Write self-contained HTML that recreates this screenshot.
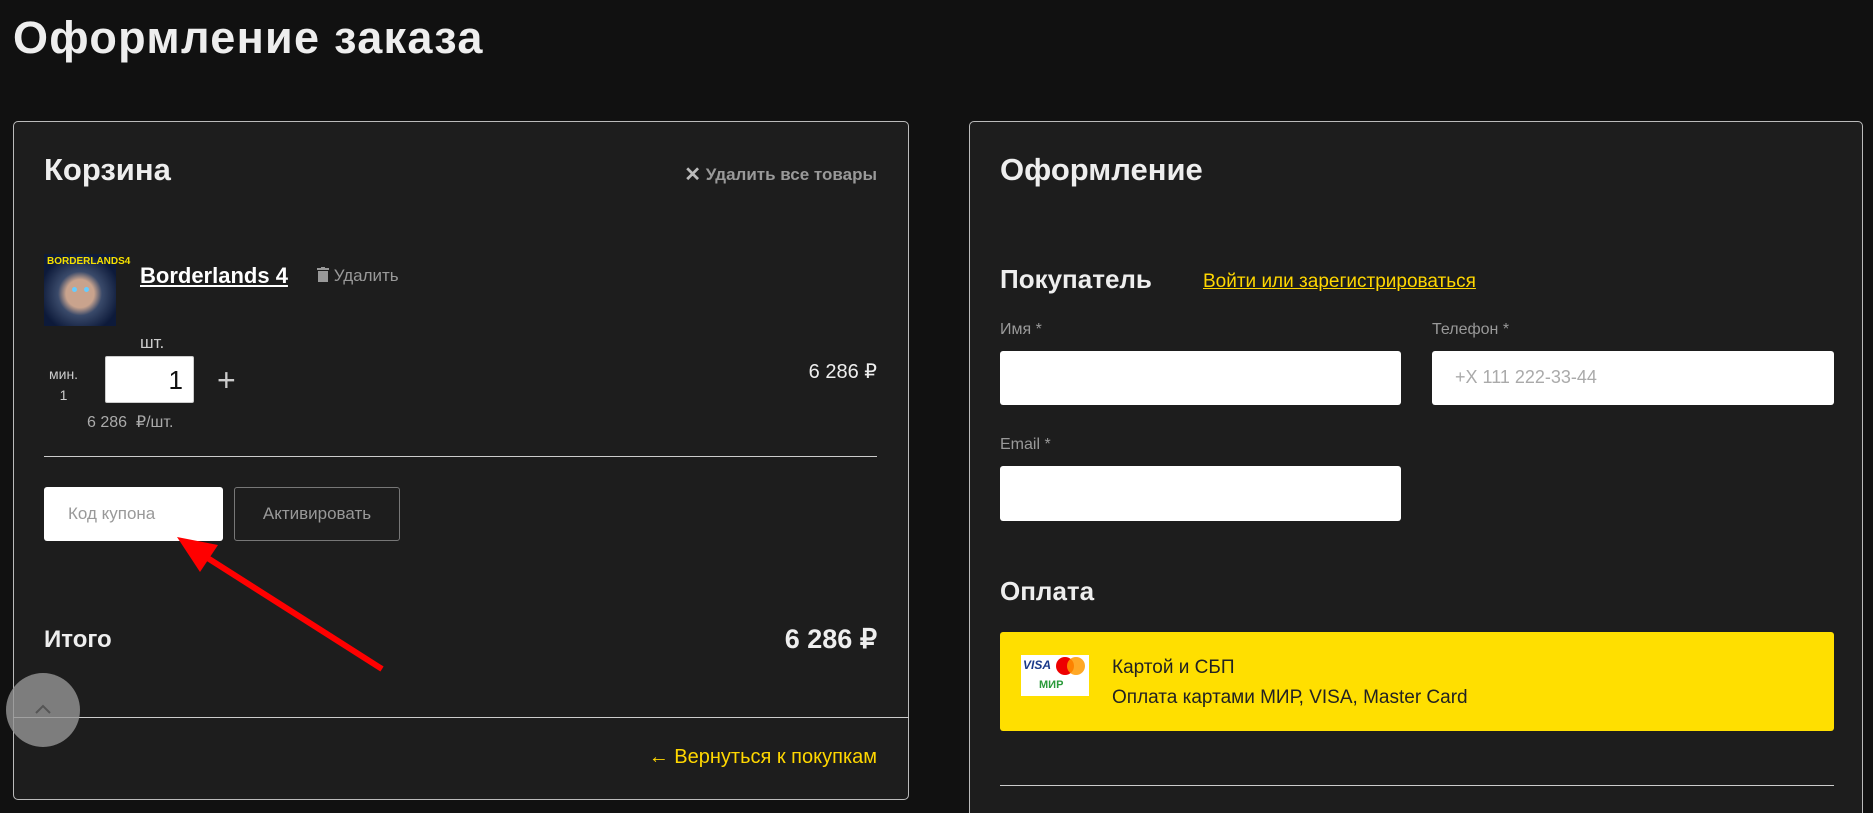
<!DOCTYPE html>
<html style="overflow:hidden;height:813px"><head><meta charset="utf-8"><style>
*{box-sizing:border-box;margin:0;padding:0}
body{width:1873px;height:813px;background:#111;font-family:"Liberation Sans",sans-serif;color:#eee;position:relative;overflow:hidden}
.a{position:absolute;white-space:nowrap}
.panel{position:absolute;background:#1d1d1d;border:1px solid #bbb;border-radius:5px}
.b{font-weight:bold}
.inp{position:absolute;background:#fff;border-radius:3px}
</style></head><body>
<div class="a b" style="left:13px;top:12px;font-size:45px;letter-spacing:1.3px;color:#eee">Оформление заказа</div>

<div class="panel" style="left:13px;top:121px;width:896px;height:679px"></div>
<div class="a b" style="left:44px;top:152px;font-size:31px">Корзина</div>
<div class="a b" style="right:996px;top:161px;font-size:17px;color:#999"><span style="font-size:20px;color:#bbb;position:relative;top:1px">✕</span> Удалить все товары</div>
<div class="a" style="left:44px;top:254px;width:72px;height:72px;background:radial-gradient(circle at 50% 55%,#c9a38d 0 14px,#3a4a6a 22px,#0d1a3a 40px);"><div style="position:absolute;left:3px;top:2px;font-size:10px;font-weight:bold;color:#f5e000">BORDERLANDS4</div><div style="position:absolute;left:28px;top:33px;width:5px;height:5px;border-radius:50%;background:#6cf"></div><div style="position:absolute;left:40px;top:33px;width:5px;height:5px;border-radius:50%;background:#6cf"></div></div>
<div class="a b" style="left:140px;top:263px;font-size:22px;text-decoration:underline;color:#fff">Borderlands 4</div>
<div class="a" style="left:317px;top:266px;font-size:17px;color:#999"><svg width="12" height="15" viewBox="0 0 12 15" style="vertical-align:-1px"><rect x="0" y="1" width="12" height="2" fill="#999"/><rect x="4" y="0" width="4" height="2" fill="#999"/><rect x="1" y="4" width="10" height="11" fill="#999"/></svg> Удалить</div>
<div class="a" style="left:140px;top:333px;font-size:17px;color:#ccc">шт.</div>
<div class="a" style="left:49px;top:364px;font-size:14px;color:#ccc;text-align:center;line-height:21px">мин.<br>1</div>
<div class="inp" style="left:105px;top:356px;width:89px;height:47px;border:1px solid #ccc;border-radius:2px"><span style="position:absolute;right:10px;top:8px;font-size:26px;color:#111">1</span></div>
<div class="a" style="left:217px;top:362px;font-size:32px;color:#ccc">+</div>
<div class="a" style="left:87px;top:412px;font-size:16px;color:#aaa">6 286 &nbsp;₽/шт.</div>
<div class="a" style="right:996px;top:359px;font-size:20px;color:#eee">6 286 ₽</div>
<div class="a" style="left:44px;top:456px;width:833px;height:1px;background:#ccc"></div>
<div class="inp" style="left:44px;top:487px;width:179px;height:54px"><span style="position:absolute;left:24px;top:17px;font-size:17px;color:#999">Код купона</span></div>
<div class="a" style="left:234px;top:487px;width:166px;height:54px;border:1px solid #777;border-radius:3px;font-size:17px;color:#999;text-align:center;line-height:52px">Активировать</div>
<svg class="a" style="left:0;top:0" width="1873" height="813"><line x1="382" y1="669" x2="195" y2="550" stroke="#f00" stroke-width="6"/><polygon points="177,537 218,545 200,572" fill="#f00"/></svg>
<div class="a b" style="left:44px;top:626px;font-size:24px;color:#eee">Итого</div>
<div class="a b" style="right:996px;top:624px;font-size:27px;color:#eee">6 286 ₽</div>
<div class="a" style="left:13px;top:717px;width:896px;height:1px;background:#ccc"></div>
<div class="a" style="right:996px;top:746px;font-size:20px;color:#ffd700">← Вернуться к покупкам</div>
<div class="a" style="left:6px;top:673px;width:74px;height:74px;border-radius:50%;background:rgba(150,150,150,0.8)"><svg width="74" height="74"><polyline points="30,40 37,33 44,40" fill="none" stroke="#555" stroke-width="2"/></svg></div>

<div class="panel" style="left:969px;top:121px;width:894px;height:720px"></div>
<div class="a b" style="left:1000px;top:152px;font-size:31px">Оформление</div>
<div class="a b" style="left:1000px;top:264px;font-size:26px">Покупатель</div>
<div class="a" style="left:1203px;top:271px;font-size:19px;color:#ffd700;text-decoration:underline">Войти или зарегистрироваться</div>
<div class="a" style="left:1000px;top:321px;font-size:16px;color:#999">Имя *</div>
<div class="a" style="left:1432px;top:321px;font-size:16px;color:#999">Телефон *</div>
<div class="inp" style="left:1000px;top:351px;width:401px;height:54px"></div>
<div class="inp" style="left:1432px;top:351px;width:402px;height:54px"><span style="position:absolute;left:23px;top:16px;font-size:18px;color:#aaa">+X 111 222-33-44</span></div>
<div class="a" style="left:1000px;top:436px;font-size:16px;color:#999">Email *</div>
<div class="inp" style="left:1000px;top:466px;width:401px;height:55px"></div>
<div class="a b" style="left:1000px;top:576px;font-size:26px">Оплата</div>
<div class="a" style="left:1000px;top:632px;width:834px;height:99px;background:#ffdf00;border-radius:3px"></div>
<div class="a" style="left:1021px;top:655px;width:68px;height:41px;background:#fff"><span style="position:absolute;left:2px;top:3px;font-size:12px;font-weight:bold;font-style:italic;color:#1a3a8a">VISA</span><span style="position:absolute;left:35px;top:2px;width:18px;height:18px;border-radius:50%;background:#e00"></span><span style="position:absolute;left:46px;top:2px;width:18px;height:18px;border-radius:50%;background:#f90;opacity:.85"></span><span style="position:absolute;left:18px;top:24px;font-size:11px;font-weight:bold;color:#2a9a3a">МИР</span></div>
<div class="a" style="left:1112px;top:653px;font-size:19px;color:#222;line-height:30px">Картой и СБП<br>Оплата картами МИР, VISA, Master Card</div>
<div class="a" style="left:1000px;top:785px;width:834px;height:1px;background:#ccc"></div>
</body></html>
